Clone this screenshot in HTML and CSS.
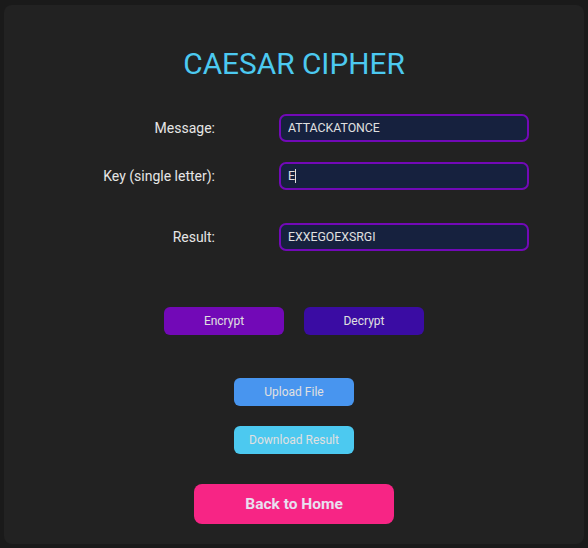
FILE: index.html
```html
<!DOCTYPE html>
<html lang="en">
<head>
<meta charset="utf-8">
<title>Caesar Cipher</title>
<link rel="stylesheet" href="styles.css">
</head>
<body>
<main class="card">
  <h1 class="title">CAESAR CIPHER</h1>
  <div class="form">
    <div class="row">
      <label class="label" for="msg">Message:</label>
      <input class="field" id="msg" type="text" value="ATTACKATONCE">
    </div>
    <div class="row">
      <label class="label" for="key">Key (single letter):</label>
      <div class="field fake"><span>E</span><span class="caret"></span></div>
    </div>
    <div class="row result-row">
      <label class="label" for="res">Result:</label>
      <input class="field" id="res" type="text" value="EXXEGOEXSRGI" readonly>
    </div>
  </div>
  <div class="actions">
    <button class="btn encrypt">Encrypt</button>
    <button class="btn decrypt">Decrypt</button>
  </div>
  <div class="files">
    <button class="btn upload">Upload File</button>
    <button class="btn download">Download Result</button>
  </div>
  <button class="home">Back to Home</button>
</main>
</body>
</html>
```
FILE: styles.css
```css
* { box-sizing: border-box; }
html, body { margin: 0; }
body {
  background: #1a1a1a;
  font-family: Roboto, "Liberation Sans", sans-serif;
  padding: 5px 4px;
  color: #e0e0e0;
}
.card {
  background: #222222;
  border-radius: 8px;
  padding: 42px 0 20px;
  display: flex;
  flex-direction: column;
  align-items: center;
}
.title {
  margin: 0;
  font-size: 29.8px;
  line-height: 34px;
  font-weight: 400;
  color: #4cc9f0;
}
.form {
  margin-top: 33px;
  width: 100%;
  display: flex;
  flex-direction: column;
  gap: 20px;
}
.row {
  display: grid;
  grid-template-columns: 211px 250px;
  column-gap: 64px;
  align-items: center;
}
.result-row { margin-top: 13px; }
.label {
  text-align: right;
  font-size: 14px;
  color: #e6e6e6;
}
.field {
  height: 28px;
  width: 250px;
  background: #16213e;
  border: 2px solid #7209b7;
  border-radius: 7px;
  padding: 0 7px;
  font-family: Roboto, "Liberation Sans", sans-serif;
  font-size: 12.3px;
  color: #e0e0e0;
  outline: none;
}
.fake {
  display: flex;
  align-items: center;
}
.caret {
  display: inline-block;
  width: 1px;
  height: 14px;
  background: #e0e0e0;
}
.actions {
  margin-top: 56px;
  display: flex;
  gap: 20px;
}
.files {
  margin-top: 43px;
  display: flex;
  flex-direction: column;
  gap: 20px;
}
.btn {
  width: 120px;
  height: 28px;
  border: none;
  border-radius: 6px;
  font-family: Roboto, "Liberation Sans", sans-serif;
  font-size: 12px;
  color: #e0e0e0;
  padding: 0;
}
.encrypt { background: #7209b7; }
.decrypt { background: #3a0ca3; }
.upload { background: #4895ef; }
.download { background: #4cc9f0; }
.home {
  margin-top: 30px;
  width: 200px;
  height: 40px;
  border: none;
  border-radius: 8px;
  background: #f72585;
  color: #e8e0f0;
  font-family: Roboto, "Liberation Sans", sans-serif;
  font-size: 15.5px;
  font-weight: 700;
}
```
